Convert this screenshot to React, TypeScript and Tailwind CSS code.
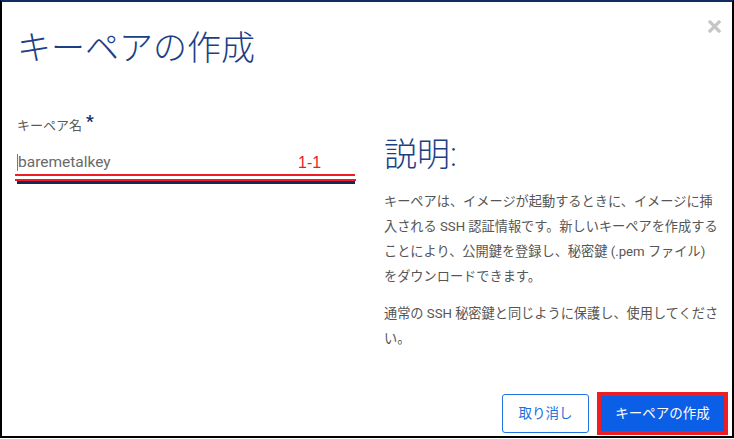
const FONT = { fontFamily: "Roboto, 'Noto Sans CJK JP', sans-serif" };

export default function App() {
  return (
    <div className="w-[734px] h-[439px] bg-white" style={FONT}>
      <div className="relative flex h-[438px] flex-col border-2 border-black border-t-[#0f2d5e] bg-white">
        {/* close */}
        <button className="absolute right-[11px] top-[18px] text-[#c6c6c6]">
          <svg width="13" height="13" viewBox="0 0 13 13">
            <path d="M2 2 L11 11 M11 2 L2 11" stroke="currentColor" strokeWidth="3.2" strokeLinecap="square" />
          </svg>
        </button>

        <h1 className="ml-[15px] mt-[26px] text-[34px] font-light leading-[40px] text-[#1c3f86]">
          キーペアの作成
        </h1>

        <div className="grid grid-cols-[340px_1fr] gap-x-[29px] pl-[13px]">
          {/* LEFT */}
          <div className="pt-[50px]">
            <div className="flex items-start text-[13px] leading-[16px] text-[#5a5a5a]">
              <span className="pl-[2px]">キーペア名</span>
              <span className="ml-[4px] -mt-[5px] text-[17px] font-bold text-[#10306a]">*</span>
            </div>
            <div className="relative mt-[18px] flex h-[20px] items-center pl-[2px]">
              <span className="h-[17px] w-px bg-[#777]" />
              <span className="text-[15.5px] leading-[20px] text-[#6a6a6a]">baremetalkey</span>
              <span
                className="absolute left-[283px] top-[1px] text-[16px] leading-[20px] text-[#ee1c24]"
                style={{ fontFamily: "'Liberation Sans', Arial, sans-serif" }}
              >
                1-1
              </span>
            </div>
            <div className="mt-[2px] h-[2px] w-[340px] bg-[#ee1c24]" />
            <div className="mt-[3px] h-[2px] w-[341px] bg-[#ee1c24]" />
            <div className="ml-[2px] h-[3px] w-[338px] bg-[#12295c]" />
          </div>

          {/* RIGHT */}
          <div className="pt-[67px] pr-[10px]">
            <h2 className="text-[33px] font-light leading-[40px] text-[#1c3f86]">説明:</h2>
            <p className="mt-[14px] text-[13.2px] leading-[25px] text-[#555]">
              <span className="block whitespace-nowrap">キーペアは、イメージが起動するときに、イメージに挿</span>
              <span className="block whitespace-nowrap">入される SSH 認証情報です。新しいキーペアを作成する</span>
              <span className="block whitespace-nowrap">ことにより、公開鍵を登録し、秘密鍵 (.pem ファイル)</span>
              <span className="block whitespace-nowrap">をダウンロードできます。</span>
            </p>
            <p className="mt-[12px] text-[13.2px] leading-[25px] text-[#555]">
              <span className="block whitespace-nowrap">通常の SSH 秘密鍵と同じように保護し、使用してくださ</span>
              <span className="block whitespace-nowrap">い。</span>
            </p>
          </div>
        </div>

        {/* FOOTER */}
        <div className="mt-auto flex items-center justify-end gap-[8px] pb-[1px] pr-[4px]">
          <button className="h-[39px] w-[87px] rounded-[3px] border border-[#1f74e6] bg-white text-[13.5px] text-[#1a6fdc]">
            取り消し
          </button>
          <div className="border-4 border-[#ee1c24]">
            <button className="h-[35px] w-[123px] bg-[#0b5ee6] text-[13.5px] text-white">
              キーペアの作成
            </button>
          </div>
        </div>
      </div>
    </div>
  );
}
